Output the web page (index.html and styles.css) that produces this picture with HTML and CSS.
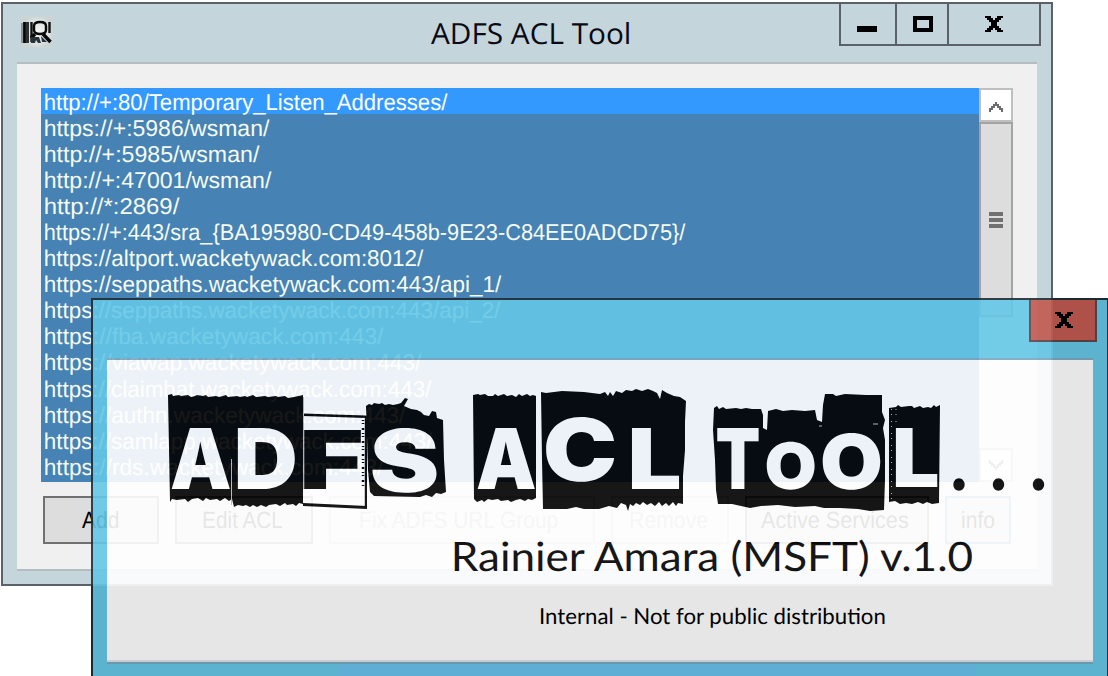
FILE: index.html
```html
<!DOCTYPE html>
<html lang="en">
<head>
<meta charset="utf-8">
<title>ADFS ACL Tool</title>
<link rel="stylesheet" href="styles.css">
</head>
<body>
<div class="desktop">
  <div class="shade"></div>

  <section class="window">
    <header class="titlebar">
      <svg class="app-icon" viewBox="0 0 32 32">
        <defs><radialGradient id="ig"><stop offset="0" stop-color="#f4f6f4"/><stop offset=".7" stop-color="#dfe4e3"/><stop offset="1" stop-color="#cbd5d6"/></radialGradient></defs>
        <rect width="32" height="32" fill="url(#ig)"/>
        <path d="M0 7h2V27H0z" fill="#8d9694"/><path d="M2 6h6V27H2z" fill="#2c3231"/><path d="M3.500 6V27" stroke="#050706" stroke-width="2"/>
        <path d="M10.500 6V26M28.500 6V17" stroke="#111" stroke-width="2.400"/>
        <path d="M13 10c0-3 2.500-4 6-4s6 1 6 4v4c0 3-2.500 4-6 4s-6-1-6-4z" fill="none" stroke="#080808" stroke-width="2.400"/>
        <path d="M22 18L29.500 26M14 18l-4 4" stroke="#080808" stroke-width="3.500"/>
        <path d="M10 21h8l2 6h-3l-2-3-1 3h-4zM20 20l6 6h-5z" fill="#26343a"/>
      </svg>
      <svg class="title" viewBox="0 0 220 40"><text data-ink="11 209 35.5">ADFS ACL Tool</text></svg>
      <div class="controls">
        <span class="ctl min"><svg viewBox="0 0 20 16"><path d="M0 10h20v6H0z"/></svg></span>
        <span class="ctl max"><svg viewBox="0 0 20 16"><path fill-rule="evenodd" d="M0 0h20v16H0zM4 4v8h12V4z"/></svg></span>
        <span class="ctl close"><svg viewBox="0 0 18 16"><path d="M0 0h6v2h2v2h2V2h2V0h6v2h-2v2h-2v2h-2v4h2v2h2v2h2v2h-6v-2h-2v-2H8v2H6v2H0v-2h2v-2h2v-2h2V6H4V4H2V2H0z"/></svg></span>
      </div>
    </header>
    <div class="client">
      <div class="listbox">
        <ul class="rows">
          <li class="selected"><svg><text data-ink="3.7 407 21.7">http://+:80/Temporary_Listen_Addresses/</text></svg></li>
          <li><svg><text data-ink="3.7 229 21.7">https://+:5986/wsman/</text></svg></li>
          <li><svg><text data-ink="3.7 219 21.7">http://+:5985/wsman/</text></svg></li>
          <li><svg><text data-ink="3.7 231 21.7">http://+:47001/wsman/</text></svg></li>
          <li><svg><text data-ink="3.7 139 21.7">http://*:2869/</text></svg></li>
          <li><svg><text data-ink="3.7 645 21.7">https://+:443/sra_{BA195980-CD49-458b-9E23-C84EE0ADCD75}/</text></svg></li>
          <li><svg><text data-ink="3.7 383 21.7">https://altport.wacketywack.com:8012/</text></svg></li>
          <li><svg><text data-ink="3.7 461 21.7">https://seppaths.wacketywack.com:443/api_1/</text></svg></li>
          <li><svg><text data-ink="3.7 460 21.7">https://seppaths.wacketywack.com:443/api_2/</text></svg></li>
          <li><svg><text data-ink="3.7 343 21.7">https://fba.wacketywack.com:443/</text></svg></li>
          <li><svg><text data-ink="3.7 381 21.7">https://viawap.wacketywack.com:443/</text></svg></li>
          <li><svg><text data-ink="3.7 391 21.7">https://claimhat.wacketywack.com:443/</text></svg></li>
          <li><svg><text data-ink="3.7 365 21.7">https://authn.wacketywack.com:443/</text></svg></li>
          <li><svg><text data-ink="3.7 392 21.7">https://samlapp.wacketywack.com:443/</text></svg></li>
          <li><svg><text data-ink="3.7 343 21.7">https://rds.wacketywack.com:443/</text></svg></li>
        </ul>
        <div class="scrollbar">
          <span class="arrow"><svg viewBox="0 0 14 10"><path d="M0 10V6h2V4h2V2h2V0h2v2h2v2h2v2h2v4h-2V8h-2V6H8V4H6v2H4v2H2v2z"/></svg></span>
          <span class="thumb"><i></i><i></i><i></i></span>
          <span class="arrow down"><svg viewBox="0 0 14 10"><path d="M0 0v4h2v2h2v2h2v2h2V8h2V6h2V4h2V0h-2v2h-2v2H8v2H6V4H4V2H2V0z"/></svg></span>
        </div>
      </div>
      <div class="buttons">
        <span class="btn w-add"><svg><text data-ink="37 73.5 30">Add</text></svg></span>
        <span class="btn w-edit"><svg><text data-ink="26 107 30">Edit ACL</text></svg></span>
        <span class="btn w-fix disabled"><svg><text data-ink="29 229 30">Fix ADFS URL Group</text></svg></span>
        <span class="btn w-remove disabled"><svg><text data-ink="17 95 30">Remove</text></svg></span>
        <span class="btn w-active"><svg><text data-ink="14 161 30">Active Services</text></svg></span>
        <span class="btn w-info default"><svg><text data-ink="15 48 30">info</text></svg></span>
      </div>
    </div>
  </section>

  <section class="splash">
    <header class="splash-bar">
      <span class="splash-close"><svg viewBox="0 0 18 16"><path d="M0 0h6v2h2v2h2V2h2V0h6v2h-2v2h-2v2h-2v4h2v2h2v2h2v2h-6v-2h-2v-2H8v2H6v2H0v-2h2v-2h2v-2h2V6H4V4H2V2H0z"/></svg></span>
    </header>
    <svg class="art" viewBox="107 360 986 300">
      <g class="tiles">
        <path d="M168 395l4-1 1 2 6-1 2 1 7-1 3 2 4-1 2-1 6 1 3-1 2 2 8-1 3 1 7-2 2 2 9-1 3 1 5-1 2 1 6-2 3 2 9-1 3 1 8-1 2 1 7-1 3 2 6-1L303 395V504l-4-1-3 3-3-2-6 1-2-2-5 3-4-2-7 1-3 2-5-2-4 2-4-2-3 2-4-2-3 1-5-1-4 2L232 499l-3 2-4-3-5 3-3-2-7 1-4-2-3 3-5-3-6 1-4 3-3-3-8 1-5-1-2 3z"/>
        <path d="M304 417H366V504H304z" fill="#fff"/>
        <path d="M303 413.500L366 415.500V418L303 416zM303 503L367 506V509L303 506zM364.800 416h2.200v91h-2.200z"/>
        <path d="M363 420V486" fill="none" stroke="#000" stroke-width="2.500" stroke-dasharray="1 2 1 4 2 3"/>
        <path d="M366 406l3-2 3 1 2-2 5 1 3-1 3 2 4-1 4 1 5-1L401 403 405 398 408 399 404 406 411 409 417 410 421 412 424 415 429 416 432 411 436 412 437 418 443 420 444 460 446 492 441 494 436 493 432 497 426 495 420 497 374 496 370 492 368 470z"/>
        <path d="M473 395l5-1 2 1 5-1 3 2 5 0 2-2 3 2 6-2 3 2 5-1 4 2 3-3 3 2 5-2 3 2 3-1L536 396V498l-4 2-4-1-3 2-5-2-4 1-5 2-3-2-7 1-3-2-6 1-4-1-4 3-2-2-5 2-3-3z"/>
        <path d="M541 392L546 393 562 391 584 392 600 394 605 392 608 396 610 392 613 396 616 391 622 393 626 390 632 391 636 389 642 391 648 389 653 391 657 393 660 399 662 390 667 393 674 396 680 397 686 401 685 422 685 450 683 476 683 504 678 503 676 506 673 502 669 506 666 503 662 506 659 502 655 506 651 503 647 505 643 502 640 505 636 503 633 506 630 504 628 511 626 505 621 503 617 508 609 506 599 509 584 509 576 507 567 509 543 509 542 460z"/>
        <path d="M714 408L717 406 719 409 723 407 726 409 736 408 741 409 746 408 752 409 761 409 763 415 763 428 767 430 768 411 776 409 783 411 792 410 805 411 815 410 817 420 822 422 823 405 825 394 833 394 836 396 845 394 866 395 882 395 882 412 885 420 883 428 885 440 885 480 884 510 870 511 858 509 840 508 824 508 815 506 795 507 778 505 761 506 750 508 732 504 718 504 716 490 715 460 713 430z"/>
        <path d="M889 408l7-1 2-2 3 2 8-1 3 0 2 2 6-2 3 2 5-1 3 1 3-3 2 2 4-2L939 503 932 504 927 502 923 504 918 502 912 504 906 503 900 504 895 501 889 502z"/>
      </g>
      <g class="cuts">
        <path d="M231.500 459V505M303.500 397V489"/>
        <path d="M891.500 409V500M896 409v17" stroke-dasharray="1 4 1 6"/>
        <path d="M819 426h3M873 424h5" stroke-width="1.500"/>
      </g>
      <g class="letters">
        <text data-ink="171 230 489 428">A</text>
        <text data-ink="237 295 489 428">D</text>
        <text class="dark" data-ink="303 361 489 430">F</text>
        <text data-ink="372 437 493 428">S</text>
        <text data-ink="477 535 489 428">A</text>
        <text data-ink="545 615 482 417">C</text>
        <text data-ink="631 680 489 428">L</text>
        <text data-ink="717 759 489 428">T</text>
        <text data-ink="766 815 490 442">O</text>
        <text data-ink="822 881 490 433">O</text>
        <text data-ink="895 938 487 428">L</text>
        <text class="dark dot" data-ink="952.500 965.500 491.500 478.500">.</text>
        <text class="dark dot" data-ink="992 1005 491.500 478.500">.</text>
        <text class="dark dot" data-ink="1032 1045 491.500 478.500">.</text>
      </g>
      <text class="author" data-ink="454 976 571">Rainier Amara (MSFT) v.1.0</text>
      <text class="notice" data-ink="541 885 623.5">Internal - Not for public distribution</text>
    </svg>
  </section>
</div>
<script src="fit.js"></script>
</body>
</html>
```
FILE: styles.css
```css
* { box-sizing: border-box; }
body { margin: 0; background: #fff; font-family: "Liberation Sans", Arial, sans-serif; }
.desktop { position: relative; width: 1108px; height: 676px; overflow: hidden; }
svg { display: block; overflow: visible; }
text { text-rendering: geometricPrecision; }

.shade { position: absolute; left: 91px; top: 298px; width: 1017px; height: 378px; background: #000; }

.window {
  position: absolute; left: 1px; top: 2px; width: 1052px; height: 584px;
  border: 2px solid #5b616a; background: #c4d5db; padding: 0 14px 13px;
  display: flex; flex-direction: column;
}
.titlebar { height: 58px; flex: none; display: flex; align-items: flex-start; margin-right: -4px; }
.app-icon { width: 32px; height: 32px; margin: 12px 0 0 4px; }
.title { width: 220px; height: 40px; margin: 4px 0 0 367px; font: 29px "Open Sans", "Noto Sans", sans-serif; fill: #0a0a14; }
.controls { display: flex; margin-left: auto; height: 42px; border: 2px solid #5b616a; border-top: 0; }
.ctl { display: flex; justify-content: center; padding-top: 12px; }
.ctl + .ctl { border-left: 2px solid #5b616a; }
.ctl svg { height: 16px; }
.min { width: 54px; padding-right: 2px; } .min svg { width: 20px; }
.max { width: 52px; padding-left: 2px; } .max svg { width: 20px; }
.close { width: 92px; } .close svg { width: 18px; }

.client {
  flex: 1; background: #f0f0f0; border-top: 2px solid #b3bdc2; border-bottom: 2px solid #b3bdc2;
  padding: 24px 24px 0;
}
.listbox { display: flex; height: 394px; }
.rows { flex: 1; margin: 0; padding: 0; list-style: none; background: #4682b4; }
.rows li { height: 26.05px; font-size: 22.8px; fill: #f5fbf2; }
.rows li.selected { background: #39f; fill: #fff; }
.rows svg { width: 100%; height: 100%; }
.scrollbar { width: 34px; background: #f0f0f0; display: flex; flex-direction: column; }
.arrow { height: 34px; border: 2px solid #bfbfbf; background: #fff; display: flex; justify-content: center; padding-top: 12px; }
.arrow svg { width: 14px; height: 10px; fill: #6e6e6e; }
.down { margin-top: auto; padding-top: 10px; }
.thumb {
  height: 195px; border: 2px solid #a3a3a3; background: #ddd;
  display: flex; flex-direction: column; align-items: center; justify-content: center; gap: 2px;
}
.thumb i { width: 14px; height: 4px; background: #707070; }

.buttons { display: flex; gap: 16px; margin: 14px 0 0 2px; }
.btn { height: 48px; border: 2px solid #707070; background: #ddd; font-size: 23.5px; flex: none; }
.btn svg { width: 100%; height: 44px; }
.w-add { width: 116px; } .w-edit { width: 138px; } .w-fix { width: 266px; }
.w-remove { width: 118px; } .w-active { width: 184px; } .w-info { width: 66px; }
.disabled { border-color: #c9c9c9; background: #efefef; fill: #a4a4a4; }
.default { border-color: #5b9bd5; }

.splash {
  position: absolute; left: 91px; top: 298px; width: 1017px; height: 378px; opacity: .9;
  border: solid #202e36; border-width: 2px 1px 0 2px;
  background: linear-gradient(90deg, #65c7e7 246px, #6ac1ed 247px, #6ac1ed 882px, #65c7e7 883px) 0 364px / 100% 12px no-repeat #65c7e7;
  padding: 0 14px;
}
.splash-bar { height: 60px; display: flex; justify-content: flex-end; align-items: flex-start; border-bottom: 2px solid #7da9c1; }
.splash-close {
  width: 68px; height: 42px; margin-right: -4px; border: 2px solid #5f4448; border-top: 0; background: #c15a50;
  display: flex; justify-content: center; padding: 12px 0 0 2px;
}
.splash-close svg { width: 18px; height: 16px; }
.art { width: 986px; height: 300px; background: #fff; box-shadow: 0 2px #e0e4e6, 0 4px #78a9c2; }
.tiles { fill: #000; }
.cuts path { fill: none; stroke: #b4b8bc; stroke-width: 1; }
.letters { font: 900 84px Inter, "Liberation Sans", sans-serif; fill: #fff; }
.letters .dark { fill: #000; }
.letters .dot { font-family: Lato, sans-serif; font-weight: 400; }
.author { font: 40.5px Lato, "Open Sans", sans-serif; }
.notice { font: 22px Lato, "Open Sans", sans-serif; }
```
FILE: fit.js
```js
// Fits each label's ink to its box: left, right, baseline and, for logo letters, top.
const ctx = document.createElement('canvas').getContext('2d');
document.querySelectorAll('text[data-ink]').forEach(function (t) {
  const box = t.dataset.ink.split(' ').map(Number);
  const cs = getComputedStyle(t);
  ctx.font = cs.fontWeight + ' ' + cs.fontSize + ' ' + cs.fontFamily;
  const m = ctx.measureText(t.textContent);
  const left = -m.actualBoundingBoxLeft;
  const sx = (box[1] - box[0]) / (m.actualBoundingBoxRight - left);
  let sy = 1, ty = box[2];
  if (box.length > 3) {
    sy = (box[2] - box[3]) / (m.actualBoundingBoxAscent + m.actualBoundingBoxDescent);
    ty = box[2] - m.actualBoundingBoxDescent * sy;
  }
  t.setAttribute('transform', 'matrix(' + [sx, 0, 0, sy, box[0] - left * sx, ty].join(',') + ')');
});
```
